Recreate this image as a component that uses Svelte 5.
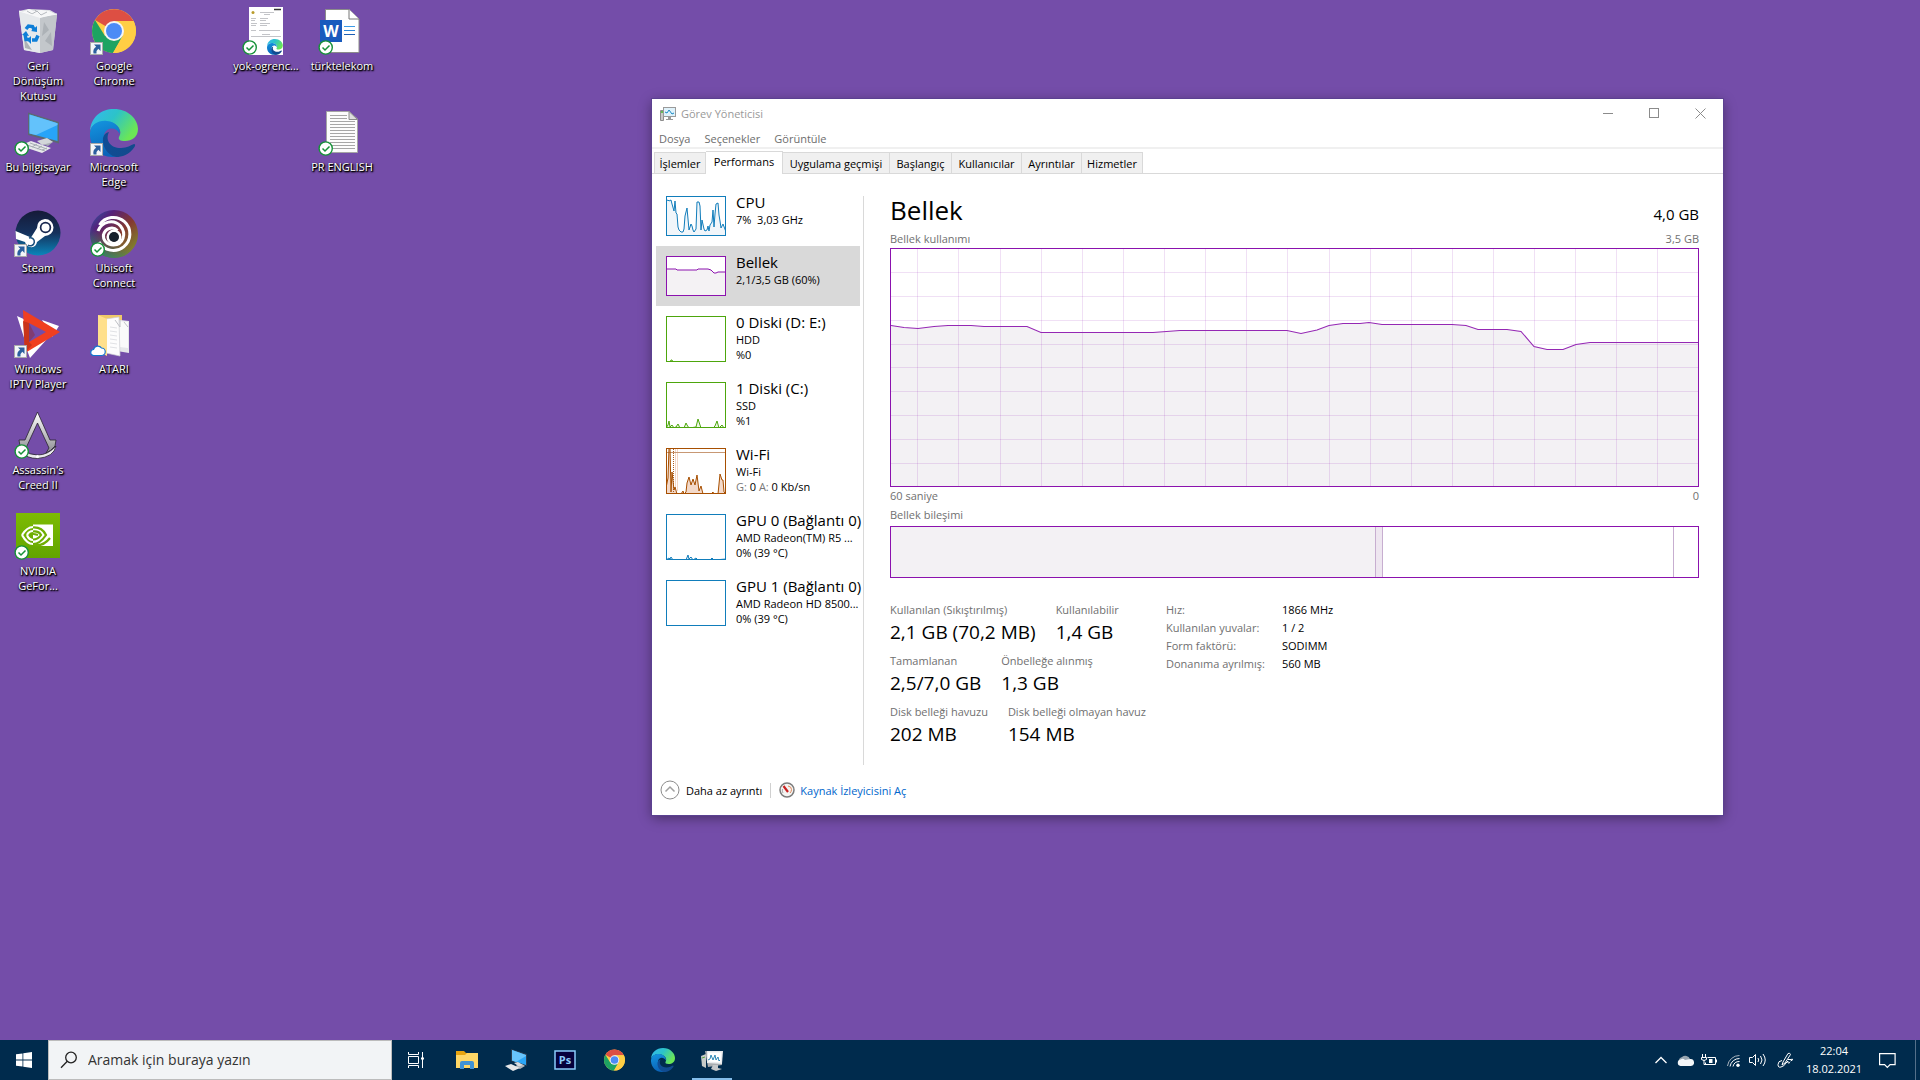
<script lang="ts">
  type Shortcut = { icon: string; lines: string[]; badge?: string };

  const columns: (Shortcut | null)[][] = [
    [
      { icon: 'bin', lines: ['Geri', 'Dönüşüm', 'Kutusu'] },
      { icon: 'pc', lines: ['Bu bilgisayar'], badge: 'check' },
      { icon: 'steam', lines: ['Steam'], badge: 'arrow' },
      { icon: 'iptv', lines: ['Windows', 'IPTV Player'], badge: 'arrow' },
      { icon: 'assassin', lines: ["Assassin's", 'Creed II'], badge: 'check' },
      { icon: 'nvidia', lines: ['NVIDIA', 'GeFor...'], badge: 'check' }
    ],
    [
      { icon: 'chrome', lines: ['Google', 'Chrome'], badge: 'arrow' },
      { icon: 'edge', lines: ['Microsoft', 'Edge'], badge: 'arrow' },
      { icon: 'ubisoft', lines: ['Ubisoft', 'Connect'], badge: 'check' },
      { icon: 'folder', lines: ['ATARI'], badge: 'cloud' }
    ],
    [],
    [{ icon: 'pdf', lines: ['yok-ogrenc...'], badge: 'check' }],
    [
      { icon: 'word', lines: ['türktelekom'], badge: 'check' },
      { icon: 'text', lines: ['PR ENGLISH'], badge: 'check' }
    ]
  ];

  const tabs = ['İşlemler', 'Performans', 'Uygulama geçmişi', 'Başlangıç', 'Kullanıcılar', 'Ayrıntılar', 'Hizmetler'];
  let activeTab = $state('Performans');

  const resources = [
    {
      name: 'CPU', lines: ['7%  3,03 GHz'], tone: 'blue', height: 40,
      points: '0,5 2,4 3,5 5,4 6,8 8,15 9,5 10,17 11,18 12,31 13,34 15,36 17,36 18,33 19,20 21,12 22,23 23,34 25,28 26,30 27,34 28,36 30,33 31,6 33,6 34,10 35,34 36,24 38,33 39,35 41,34 42,30 43,35 44,29 46,26 47,14 48,31 49,18 50,8 52,7 53,19 54,25 55,32 57,28 60,36'
    },
    {
      name: 'Bellek', lines: ['2,1/3,5 GB (60%)'], tone: 'purple', height: 40,
      points: '0,13 10,13 11,14 31,14 32,13 42,13 45,14 47,16 48,17 50,17 52,16 60,16'
    },
    { name: '0 Diski (D: E:)', lines: ['HDD', '%0'], tone: 'green', height: 46, points: '0,46 4,46 5,44 6,44 7,46 60,46' },
    {
      name: '1 Diski (C:)', lines: ['SSD', '%1'], tone: 'green', height: 46,
      points: '0,46 2,43 3,39 4,45 6,43 8,46 10,45 12,42 14,46 18,46 20,41 21,43 23,46 30,45 32,37 35,46 47,46 49,44 51,39 53,46 56,43 58,46 60,46'
    },
    {
      name: 'Wi-Fi', lines: ['Wi-Fi'], tone: 'orange', height: 46,
      points: '0,40 2,30 3,0 4,0 5,44 6,24 8,42 9,39 11,46 15,46 17,43 18,46 20,44 21,35 23,29 25,37 27,31 29,37 31,27 33,43 35,38 37,46 45,46 47,44 48,46 52,46 54,26 56,32 57,32 58,44 60,46'
    },
    {
      name: 'GPU 0 (Bağlantı 0)', lines: ['AMD Radeon(TM) R5 ...', '0% (39 °C)'], tone: 'blue', height: 46,
      points: '0,46 3,44 4,45 5,43 7,46 20,46 22,41 23,45 25,43 27,46 30,44 32,46 44,46 46,44 48,46 60,45'
    },
    { name: 'GPU 1 (Bağlantı 0)', lines: ['AMD Radeon HD 8500...', '0% (39 °C)'], tone: 'blue', height: 46, points: '' }
  ];
  let selected = $state('Bellek');

  const usage =
    '0,76.5 13,78.5 27,79.5 43,77.5 57,76.5 80,76.5 93,77.5 136,77.5 150,83.5 262,83.5 289,81.5 396,81.5 410,84.5 426,81 438,76.5 452,74.5 469,74.5 478,73.5 491,75.5 561,75.5 575,76.5 587,80.5 616,80.5 630,82.5 643,97.5 656,100.5 672,100.5 685,95.5 699,93.5 807,93.5';
  const gridX = Array.from({ length: 19 }, (_, i) => Math.round(26.3 + i * 41.12) + 0.5);
  const gridY = Array.from({ length: 9 }, (_, i) => Math.floor((i + 1) * 23.85 + 0.65) - 0.5);

  const statRows = [
    [['Kullanılan (Sıkıştırılmış)', '2,1 GB (70,2 MB)'], ['Kullanılabilir', '1,4 GB']],
    [['Tamamlanan', '2,5/7,0 GB'], ['Önbelleğe alınmış', '1,3 GB']],
    [['Disk belleği havuzu', '202 MB'], ['Disk belleği olmayan havuz', '154 MB']]
  ];
  const hardware = [
    ['Hız:', '1866 MHz'],
    ['Kullanılan yuvalar:', '1 / 2'],
    ['Form faktörü:', 'SODIMM'],
    ['Donanıma ayrılmış:', '560 MB']
  ];
  const pinned = [
    ['explorer', 'Dosya Gezgini'],
    ['pc', 'Bu bilgisayar'],
    ['ps', 'Photoshop'],
    ['chrome', 'Google Chrome'],
    ['edge', 'Microsoft Edge'],
    ['taskmgr', 'Görev Yöneticisi']
  ];
</script>

{#snippet art(name: string)}
  {#if name === 'bin'}
    <path d="M5 3 L14 1 L36 2 L43 6 L39 42 L26 45 L10 42 Z" fill="#d9dce0" />
    <path d="M5 3 L26 9 L26 45 L10 42 Z" fill="#e6e9ec" />
    <path d="M26 9 L43 6 L39 42 L26 45 Z" fill="#c3c7cb" />
    <path d="M30 14l5 8-7 6zM37 24l-6 9 7 5zM10 30l8 12-7-2z" fill="#adb2b7" />
    <path d="M8 4 L15 1 L20 3 L27 2 L35 3 L41 6 L26 10 Z" fill="#f6f7f8" />
    <path d="M13 3l5 3 5-3 4 4 6-3M20 1l3 3" stroke="#b6babf" fill="none" />
    <path d="M5 3 L26 9 L43 6" stroke="#f8f9fa" fill="none" />
    <g fill="none" stroke="#0f7fd8" stroke-width="3.500">
      <path d="M12 21l2.500-3 4 .5 1.500 3" /><path d="M11 26l1 5.500h4" /><path d="M18 32h4l2-4.500" />
    </g>
    <path d="M17 23l6 1 0-6zM17 28v8l-4-4zM8 27l4-4 3 5z" fill="#0f7fd8" />
  {:else if name === 'pc'}
    <path d="M27 33l9-4 4 3-6 5-6-2z" fill="#a9afb5" />
    <path d="M14 3.500 L45 13 V34.500 L14 26 Z" fill="#5d6873" />
    <path d="M15.500 5.500 L43.500 14.300 V32 L15.500 24.500 Z" fill="#27a4f8" />
    <path d="M15.500 5.500 L43.500 14.300 V16 L22 26 L15.500 24.500 Z" fill="#63c2fb" />
    <path d="M23 32l10-3 6 4-11 3z" fill="#d3d6d9" />
    <path d="M12 34l5-2 20 7-9 5-18-6z" fill="#e7e9eb" />
    <path d="M13 36l18 6M16 34l17 6M18 38l5-3M23 40l5-3M28 41l5-2" stroke="#a7adb3" />
  {:else if name === 'steam'}
    <defs><linearGradient id="steam-fill" x2="0" y2="1"><stop stop-color="#151a38" /><stop offset=".5" stop-color="#15315c" /><stop offset="1" stop-color="#0a86bb" /></linearGradient></defs>
    <circle cx="24" cy="23" r="22.500" fill="url(#steam-fill)" />
    <path d="M1.500 21 L17 27.500 L23 18 Q23 10 31 9 A8.500 8.500 0 1 1 31 26 L23 32 Q22 38 16 37 Q12 36 11 32 L2 29 Z" fill="#fff" />
    <circle cx="31.500" cy="17.500" r="5.700" fill="#17264e" /><circle cx="31.500" cy="17.500" r="4" fill="#fff" />
    <path d="M15 28a4 4 0 1 1-1 7" fill="none" stroke="#174d7b" stroke-width="1.500" />
  {:else if name === 'iptv'}
    <path d="M3 5 L14 10 L13 36 Z M28 9 L45 15 L38 26 Z M11 34 L16 47 L34 27 Z" fill="#fff" />
    <path fill-rule="evenodd" d="M9 -1 L46 21 L11 42 Z M15 12 V31 L32 21 Z" fill="#f03f20" />
    <path d="M9 10 L15 12 V31 L18 34 L11 42 Z" fill="#c9341a" />
    <path d="M15 12 L21 24 L15 31 Z" fill="#8e2a3c" opacity=".5" />
  {:else if name === 'assassin'}
    <defs><linearGradient id="blade" x2="0" y2="1"><stop stop-color="#fff" /><stop offset="1" stop-color="#8e8e93" /></linearGradient></defs>
    <g stroke="#28242e" stroke-width=".8">
      <path d="M23.500 0 L36 28 L42 28 L41 34 Q37 39 32 41 L35 36 L23.500 11 L12 36 L15 41 Q9 38 6 34 L5 28 L11 28 Z" fill="url(#blade)" />
      <path d="M8 38 Q16 43 23.500 43 Q34 43 42 34 Q40 45 23.500 46.500 Q13 46.500 7 40 Z" fill="#e9e9ec" />
    </g>
    <circle cx="23.500" cy="44.500" r="1.500" fill="#fff" />
  {:else if name === 'nvidia'}
    <defs><linearGradient id="nv-fill" x2="0" y2="1"><stop stop-color="#7dbb03" /><stop offset="1" stop-color="#62a400" /></linearGradient></defs>
    <rect x="2" y="0" width="44" height="45" fill="url(#nv-fill)" />
    <rect x="19" y="11.500" width="20" height="21.500" fill="#fff" />
    <g fill="none" stroke-width="2.200">
      <path d="M8 22 Q13 14 19 14 M8 22 Q13 31 19 31 M13 22 Q15 18 19 18 M13 22 Q15 27 19 27" stroke="#fff" />
      <path d="M19 14.500 Q28 14 32 22 Q26 31 19 31 M19 18.500 Q25 18 27 22 Q24 26.500 19 26.500 M36 25 Q29 34 19 32" stroke="#6fae02" />
      <path d="M17 23 Q17 20 20 21 L24 22" stroke="#6fae02" />
    </g>
  {:else if name === 'chrome'}
    <circle cx="24" cy="23" r="22" fill="#ffce44" />
    <path d="M24 23 L5 12 A22 22 0 0 1 43.500 13 H24 Z" fill="#dd4f43" />
    <path d="M5 12 A22 22 0 0 0 23 45 L33 28 L24 23 L15 28 Z" fill="#1da362" />
    <path d="M24 13 H43.500 A22 22 0 0 1 23 45 L33 27 Z" fill="#ffce44" />
    <circle cx="24" cy="23" r="10" fill="#f4f4f4" /><circle cx="24" cy="23" r="8" fill="#4c8bf5" />
  {:else if name === 'edge'}
    <defs>
      <linearGradient id="edge-top" x2="1" y2=".5"><stop stop-color="#35b8f1" /><stop offset=".5" stop-color="#2cc3c9" /><stop offset="1" stop-color="#6be656" /></linearGradient>
      <linearGradient id="edge-mid" x2=".3" y2="1"><stop stop-color="#1496e0" /><stop offset="1" stop-color="#0a63b8" /></linearGradient>
      <linearGradient id="edge-low" x2="1"><stop stop-color="#0f4d95" /><stop offset="1" stop-color="#134a8c" /></linearGradient>
    </defs>
    <path d="M0 22 C1 8 11 0 24 0 C38 0 48 10 48 20 C48 28 42 32 35 32 C30 32 28 30.500 29 28 C33 22 28 15 20 13 C10 11 2 15 0 22 Z" fill="url(#edge-top)" />
    <path d="M0 24 C1 15 9 11 17 12 C26 13 31 19 29.500 25 C26 17 15 18 14 27 C13 38 22 45 32 46 C14 53 -1 40 0 24 Z" fill="url(#edge-mid)" />
    <path d="M19 23 C15 31 20 39 31 39 C37 39 41 36 44 35 Q46 35 44.500 38 C39 46 32 48 26 48 C17 46 12 37 13 29 Q14 24 19 23 Z" fill="url(#edge-low)" />
  {:else if name === 'ubisoft'}
    <defs>
      <linearGradient id="ubi-fill" x2="1" y2="1"><stop stop-color="#2463a8" /><stop offset=".25" stop-color="#55217b" /><stop offset=".55" stop-color="#84382f" /><stop offset="1" stop-color="#7da32c" /></linearGradient>
      <linearGradient id="ubi-low" x1=".3" y1=".5" x2="0" y2="1"><stop stop-color="#168a80" stop-opacity="0" /><stop offset="1" stop-color="#17a37c" /></linearGradient>
    </defs>
    <circle cx="24" cy="24" r="24" fill="url(#ubi-fill)" /><circle cx="24" cy="24" r="24" fill="url(#ubi-low)" />
    <g fill="none" stroke="#fff" stroke-width="3">
      <path d="M9.500 15 A16.500 16.500 0 1 1 9 32" />
      <path d="M8 21 C12 11 24 9 30.500 16 C37 24 33 35 23.500 35 C17 35 12.500 30 13.500 24" />
      <path d="M13.500 25 C15 18 23 16 27.500 20.500" />
      <circle cx="24" cy="27" r="6" />
    </g>
    <circle cx="24" cy="27" r="5" fill="#17212c" />
  {:else if name === 'folder'}
    <path d="M8 4 H32 V40 H10 Z" fill="#efc969" />
    <path d="M22 8 L39 10 V42 L27 40 Z" fill="#e6e7ea" /><path d="M28 10 L38 11 V37 L30 36" fill="#fafafa" />
    <path d="M16 8 L29 6 V9 L30 45 L16 42 Z" fill="#fdfdfd" stroke="#cfd0d4" stroke-width=".7" />
    <path d="M25 9l5 7v-7M34 11l4 5" stroke="#bfc1c6" fill="none" />
    <path d="M20 16l7 1M20 20l7 1M20 24l7 1M20 28l7 1M20 32l7 1M20 36l7 1" stroke="#e1e2e5" />
    <path d="M8 4 L17 8 V45 L8 40 Z" fill="#ffe08c" />
  {:else if name === 'pdf'}
    <rect x="7" y="-1" width="34" height="48" fill="#fff" />
    <path d="M32 1.500h7" stroke="#333" stroke-width="1.500" />
    <circle cx="11" cy="4.500" r="1.500" fill="#b99c2a" />
    <path d="M18 4.500h14M22 6.500h6M9 10.500h5M18 10.500h8M9 12.500h4M18 12.500h6M9 15.500h6M18 15.500h10M9 17.500h5M18 17.500h7M9 22.500h5M17 22.500h21M9 28.500h30M20 26.500h8" stroke="#c3c4c8" />
    <g transform="translate(25 31) scale(.33)">{@render art('edge')}</g>
  {:else if name === 'word'}
    <path d="M7.500 1.500 H31 L41 11 V44.500 H7.500 Z" fill="#fff" stroke="#8b8b8b" />
    <path d="M31 1.500 V11 H41" fill="#fff" stroke="#777" />
    <path d="M26 18.500h11" stroke="#3c9ae6" /><path d="M26 22.500h11" stroke="#2d87da" /><path d="M26 26.500h11" stroke="#1d5fb5" />
    <rect x="2" y="12" width="22" height="22" fill="#185abd" />
    <text x="13" y="28.500" text-anchor="middle" class="logo-text" font-size="16" fill="#fff">W</text>
  {:else if name === 'text'}
    <path d="M8.500 2.500 H31 L39.500 10 V43.500 H8.500 Z" fill="#fcfcfc" stroke="#a5a5a5" />
    <path d="M31 2.500 V10.500 H39.500 Z" fill="#dedede" stroke="#8c8c8c" />
    <path d="M12 6.500h17M12 9.500h17M12 12.500h25M12 15.500h25M12 18.500h25M12 21.500h25M12 24.500h25M12 27.500h25M12 30.500h25M12 33.500h25M12 36.500h25M12 39.500h25" stroke="#a6a6a6" />
  {/if}
{/snippet}

{#snippet overlay(kind: string)}
  {#if kind === 'check'}
    <circle cx="7.700" cy="39.500" r="6.600" fill="#fff" stroke="#159138" stroke-width="1.400" />
    <path d="M4.500 39.500l2.500 2.500 4.500-4.500" fill="none" stroke="#159138" stroke-width="1.500" />
  {:else if kind === 'arrow'}
    <rect x=".5" y="34.500" width="12" height="12" fill="#f4f6f8" stroke="#a9a9a9" />
    <path d="M4 36.500h6.500V43l-2.200-2.200Q6 42.500 6.500 45.500H3.500Q2.500 41 6.200 38.700Z" fill="#2b5f9e" />
  {:else if kind === 'cloud'}
    <path d="M4 44.500a3 3 0 0 1-.5-6 4.500 4.500 0 0 1 8-1.500 3.700 3.700 0 0 1 0 7.500z" fill="#fff" stroke="#1175cf" stroke-width="1.200" />
  {/if}
{/snippet}

<div class="screen">
  <main class="desktop">
    <div class="shortcuts">
      {#each columns as column}
        <div class="shortcut-column">
          {#each column as item}
            {#if item}
              <button class="shortcut">
                <svg width="48" height="48" viewBox="0 0 48 48" aria-hidden="true">
                  {@render art(item.icon)}
                  {#if item.badge}{@render overlay(item.badge)}{/if}
                </svg>
                <span class="caption">
                  {#each item.lines as line}<span>{line}</span>{/each}
                </span>
              </button>
            {/if}
          {/each}
        </div>
      {/each}
    </div>

    <section class="window" aria-label="Görev Yöneticisi">
      <header class="titlebar">
        <svg width="16" height="16" viewBox="0 0 16 16" aria-hidden="true">
          <path d="M.5 4.500h3v10h-3z" fill="#c9c9c9" stroke="#8d8d8d" /><path d="M1 6h2" stroke="#45b52e" stroke-width="1.500" />
          <rect x="3.500" y="1.500" width="12" height="9" fill="#dff2fb" stroke="#9a9a9a" />
          <path d="M5 6l2 1 2-3 3 4 2-1" fill="none" stroke="#1989c4" /><path d="M8 11h3v2h2v1H6v-1h2z" fill="#999" />
        </svg>
        <h1>Görev Yöneticisi</h1>
        <div class="window-controls">
          <button aria-label="Simge durumuna küçült"><svg width="11" height="11"><path d="M0 5.500h10" stroke="#8b8b8b" /></svg></button>
          <button aria-label="Ekranı kapla"><svg width="11" height="11"><rect x=".5" y=".5" width="9" height="9" fill="none" stroke="#8b8b8b" /></svg></button>
          <button aria-label="Kapat"><svg width="11" height="11"><path d="M.5.5l10 10M10.500.5l-10 10" stroke="#8b8b8b" /></svg></button>
        </div>
      </header>
      <nav class="menubar" aria-label="Menü">
        <button>Dosya</button><button>Seçenekler</button><button>Görüntüle</button>
      </nav>
      <div class="tabs" role="tablist">
        {#each tabs as tab}
          <button role="tab" aria-selected={activeTab === tab} class:active={activeTab === tab} onclick={() => (activeTab = tab)}>{tab}</button>
        {/each}
      </div>

      <div class="content">
        <aside class="resources">
          {#each resources as item}
            <button class="resource {item.tone}" class:selected={selected === item.name} onclick={() => (selected = item.name)}>
              <svg class="spark" width="60" height={item.height} viewBox="0 0 60 {item.height}" aria-hidden="true">
                <rect width="60" height={item.height} fill="#fff" />
                {#if item.points}
                  <polygon points="0,{item.height} {item.points} 60,{item.height}" class="area" />
                  {#if item.name === 'Wi-Fi'}
                    <path d="M9.500 1v40M11.500 1v42" stroke="#f4d6c6" /><path d="M7.500 1v45" stroke="#ad5a1c" stroke-dasharray="1 1" />
                    <path d="M0 4.500h60" stroke="#c89874" />
                  {/if}
                  <polyline points={item.points} class="trace" />
                {/if}
                <rect x=".5" y=".5" width="59" height={item.height - 1} class="frame" />
              </svg>
              <span class="resource-text">
                <span class="resource-name">{item.name}</span>
                {#each item.lines as line}<span class="resource-line">{line}</span>{/each}
                {#if item.name === 'Wi-Fi'}
                  <span class="resource-line"><span class="muted">G:</span> 0 <span class="muted">A:</span> 0 Kb/sn</span>
                {/if}
              </span>
            </button>
          {/each}
        </aside>

        <section class="details">
          <div class="heading"><h2>Bellek</h2><span class="total">4,0 GB</span></div>
          <div class="legend"><span>Bellek kullanımı</span><span>3,5 GB</span></div>
          <div class="chart">
            <svg viewBox="0 0 807 237" preserveAspectRatio="none" aria-hidden="true">
              <polygon points="0,237 {usage} 807,237" fill="#f3f1f4" />
              <g stroke="#8b12ae" stroke-opacity=".13" shape-rendering="crispEdges">
                {#each gridX as x}<path d="M{x} 0V237" />{/each}
                {#each gridY as y}<path d="M0 {y}H807" />{/each}
              </g>
              <polyline points={usage} fill="none" stroke="#9528b4" stroke-width="1.100" />
            </svg>
          </div>
          <div class="legend axis"><span>60 saniye</span><span>0</span></div>
          <div class="legend"><span>Bellek bileşimi</span></div>
          <div class="composition"><i class="used"></i><i class="modified"></i><i class="standby"></i><i class="free"></i></div>

          <div class="figures">
            <div class="stats">
              {#each statRows as row}
                <dl class="stat-row">
                  {#each row as [label, value]}
                    <div><dt>{label}</dt><dd>{value}</dd></div>
                  {/each}
                </dl>
              {/each}
            </div>
            <table class="hardware">
              <tbody>
                {#each hardware as [label, value]}
                  <tr><th scope="row">{label}</th><td>{value}</td></tr>
                {/each}
              </tbody>
            </table>
          </div>
        </section>
      </div>

      <footer class="footer">
        <button class="less">
          <svg width="20" height="20" viewBox="0 0 20 20" fill="none" aria-hidden="true"><circle cx="10" cy="10" r="9" stroke="#8c8c8c" /><path d="M5.500 11.500l4.500-4.500 4.500 4.500" stroke="#a0a0a0" stroke-width="1.500" /></svg>
          Daha az ayrıntı
        </button>
        <a href="#kaynak-izleyicisi">
          <svg width="16" height="16" viewBox="0 0 16 16" fill="none" aria-hidden="true">
            <circle cx="8" cy="8" r="7" fill="#f4f4f2" stroke="#7b7b7b" stroke-width="1.500" />
            <path d="M4 11a4.500 4.500 0 0 1-.5-4" stroke="#aaa" /><path d="M9 4q3.500.5 3.500 3.500 0 2-1.500 3.500" stroke="#df8658" />
            <path d="M4.500 4l4.500 6" stroke="#c92020" stroke-width="2.200" />
          </svg>
          Kaynak İzleyicisini Aç
        </a>
      </footer>
    </section>
  </main>

  <footer class="taskbar">
    <button class="start" aria-label="Başlat">
      <svg width="16" height="16" viewBox="0 0 16 16" fill="#fff"><path d="M0 2.300l6.500-.9v6.100H0zM7.300 1.300L16 0v7.500H7.300zM0 8.400h6.500v6.200L0 13.700zM7.300 8.400H16V16l-8.700-1.200z" /></svg>
    </button>
    <label class="search">
      <svg width="18" height="18" viewBox="0 0 18 18" fill="none" stroke="#222" stroke-width="1.300" aria-hidden="true"><circle cx="11" cy="6.500" r="5.300" /><path d="M7.300 10.300L1 16.700" /></svg>
      <input type="text" placeholder="Aramak için buraya yazın" aria-label="Aramak için buraya yazın" />
    </label>
    <button class="task-view" aria-label="Görev Görünümü">
      <svg width="17" height="16" viewBox="0 0 17 16" fill="none" stroke="#fff"><path d="M.5 0v2.500h10V0M.5 16v-2.500h10V16M.5 4.500h10v7H.5zM14.500 0v16" /><path d="M13 5.500h3v2h-3z" fill="#fff" stroke="none" /></svg>
    </button>
    <div class="pinned">
      {#each pinned as [icon, label]}
        <button aria-label={label} class:running={icon === 'taskmgr'}>
          {#if icon === 'explorer'}
            <svg width="22" height="18" viewBox="0 0 22 18"><path d="M0 0h8l2 2h12v4H0z" fill="#e8a40f" /><path d="M1 4h8l2-2h11v15H0V4z" fill="#ffd766" /><path d="M4 18v-6q0-2 2-2h10q2 0 2 2v6h-4v-4H8v4z" fill="#3f92d4" /></svg>
          {:else if icon === 'pc'}
            <svg width="24" height="24" viewBox="0 0 24 24"><path d="M13 16l5-1 3 3-5 3-4-2z" fill="#aeb4b9" /><path d="M7 1l16 5v12L7 13z" fill="#2a3d50" /><path d="M8 2l14 5v10L8 12.500z" fill="#2ba6f7" /><path d="M8 2l14 5v1L12 14l-4-1.500z" fill="#68c4fb" /><path d="M10 15l4-1 5 3-4 1.500z" fill="#d8dbde" /><path d="M1 18l6-2 9 4-7 3z" fill="#e5e7e9" /></svg>
          {:else if icon === 'ps'}
            <svg width="22" height="20" viewBox="0 0 22 20"><rect x="1" y="1" width="20" height="18" fill="#06003c" stroke="#8ccbfb" stroke-width="1.500" /><text x="11" y="14" text-anchor="middle" class="logo-text" font-size="11" fill="#8ccbfb">Ps</text></svg>
          {:else if icon === 'taskmgr'}
            <svg width="24" height="24" viewBox="0 0 24 24"><path d="M1 8l5-2v14l-4-2z" fill="#c7cbc9" /><path d="M2 10l3-1" stroke="#5aa53c" /><path d="M5 3l15 1 2 13-14 2z" fill="#a9adb0" /><path d="M7 3h16l-1 13-15-1z" fill="#e8eaec" /><path d="M8 4.500h13.500l-.8 10L8 13.500z" fill="#fff" /><path d="M8 12l2-1 1-4 2 5 2-5 1 5 2-3 1 4 1-1" fill="none" stroke="#2b87b5" /><path d="M13 17h5v3l4 1-6 2-5-2z" fill="#c4c7c9" /></svg>
          {:else}
            <svg width={icon === 'edge' ? 24 : 23} height={icon === 'edge' ? 24 : 23} viewBox="0 0 48 48">{@render art(icon)}</svg>
          {/if}
        </button>
      {/each}
    </div>
    <div class="tray">
      <button aria-label="Gizli simgeler"><svg width="12" height="8" viewBox="0 0 12 8" fill="none" stroke="#fff" stroke-width="1.300"><path d="M.5 7L6 1.500 11.500 7" /></svg></button>
      <button aria-label="OneDrive"><svg width="17" height="11" viewBox="0 0 17 11"><path d="M2 7a4 4 0 0 1 3-5 5 5 0 0 1 8 2l-8 6z" fill="#99a6b1" /><path d="M3.500 11a3.300 3.300 0 0 1 0-6.500Q6 3 8 5l5-1a3.400 3.400 0 0 1 1 7z" fill="#f4f7f9" /></svg></button>
      <button aria-label="Pil"><svg width="17" height="13" viewBox="0 0 17 13" fill="none" stroke="#fff"><path d="M6.500 3.500h8v7h-10v-2M15.500 5.500v3M1.500 0v3M4.500 0v3M.5 3.500h5v2q-2.500 2-5 0zM3 6v4.500h2" /><path d="M8 5h3.500v4H8z" fill="#fff" stroke="none" /></svg></button>
      <button aria-label="Wi-Fi"><svg width="13" height="13" viewBox="0 0 13 13" fill="none"><g stroke="#aab5bf"><path d="M.5 12A12 12 0 0 1 12.500 1.500" /></g><path d="M3 12.500A9.500 9.500 0 0 1 12.500 4.500M6 12.500a6.500 6.500 0 0 1 6.500-5" stroke="#fff" /><circle cx="11" cy="11.300" r="1.700" fill="#fff" /></svg></button>
      <button aria-label="Ses"><svg width="17" height="14" viewBox="0 0 17 14" fill="none" stroke="#fff"><path d="M.5 4.500h3L6.500 1.500v11l-3-3h-3zM9 5q1.500 2 0 4M11.500 3q3 4 0 8M14 1q4.500 6 0 12" /></svg></button>
      <button class="pen" aria-label="Kalem"><svg width="17" height="16" viewBox="0 0 17 16" fill="none" stroke="#fff"><path d="M6 10L11 1.500q2-1 2.500 1L8 11l-3 2zM5 8.500Q1 9 1 12.500t3 2.500q3-.5 5-4l2-2q-1 3 2 1.500M11 7.500h3q2-1 1.500.5l-2 1" /></svg></button>
      <time datetime="2021-02-18T22:04"><span>22:04</span><span>18.02.2021</span></time>
      <button class="notifications" aria-label="Bildirimler"><svg width="17" height="17" viewBox="0 0 17 17" fill="none" stroke="#fff" stroke-width="1.200"><path d="M.6 1.600h15.500v11h-5L8.300 15.500 5.600 12.600h-5z" /></svg></button>
      <button class="show-desktop" aria-label="Masaüstünü göster"></button>
    </div>
  </footer>
</div>

<style>
  :global(body) { margin: 0; }
  .screen {
    display: flex;
    flex-direction: column;
    min-height: 100vh;
    background: #744da9;
    color: #000;
    font-family: 'Open Sans', 'Noto Sans', sans-serif;
    font-size: 11px;
    line-height: 15px;
  }
  button, input { font: inherit; color: inherit; border: 0; padding: 0; background: none; }
  h1, h2, dl, dd { margin: 0; font-weight: 400; }
  svg { display: block; flex: none; }
  .logo-text { font-family: 'Open Sans', sans-serif; font-weight: 700; }

  .desktop { position: relative; flex: 1; min-height: 860px; }
  .shortcuts { display: flex; padding-top: 8px; }
  .shortcut-column { width: 76px; }
  .shortcut { display: flex; flex-direction: column; align-items: center; gap: 2px; width: 100%; height: 101px; }
  .shortcut svg { overflow: visible; }
  .caption { display: flex; flex-direction: column; align-items: center; color: #fff; white-space: nowrap; text-shadow: 1px 1px 2px #000, 0 1px 2px #000, 1px 1px 1px #000; }

  .window {
    position: absolute;
    top: 99px;
    left: 652px;
    right: 197px;
    bottom: 225px;
    display: flex;
    flex-direction: column;
    background: #fff;
    box-shadow: 0 0 0 1px #5b4191, 0 3px 12px #0006;
  }
  .titlebar { display: flex; align-items: center; gap: 5px; height: 29px; padding-left: 8px; color: #999; }
  h1 { flex: 1; font-size: 11px; }
  .window-controls { display: flex; }
  .window-controls button { display: grid; place-items: center; width: 46px; height: 29px; }
  .menubar { display: flex; align-items: flex-start; gap: 14px; padding: 3px 7px 0; height: 16px; border-bottom: 2px solid #f0f0f0; color: #6d6d6d; }
  .tabs {
    display: grid;
    grid-template-columns: 52px 77px 107px 62px 70px 60px 61px;
    align-items: end;
    height: 24px;
    padding-left: 2px;
    border-bottom: 1px solid #d9d9d9;
  }
  .tabs button { height: 21px; background: #f0f0f0; border: solid #d9d9d9; border-width: 1px 1px 0 0; white-space: nowrap; }
  .tabs button:first-child { border-left-width: 1px; }
  .tabs .active { height: 23px; padding-bottom: 3px; margin-bottom: -1px; background: #fff; }

  .content { flex: 1; display: flex; padding-top: 12px; min-height: 0; }
  .resources { width: 204px; margin-left: 4px; flex: none; }
  .resource { display: flex; gap: 10px; width: 204px; padding: 7px 0 10px 10px; text-align: left; white-space: nowrap; }
  .resource.selected { background: #d9d9d9; }
  .spark { margin-top: 3px; }
  .resource-text { display: flex; flex-direction: column; }
  .resource-name { font-size: 15px; line-height: 19px; }
  .resource-line { white-space: pre; }
  .muted { color: #777; }
  .frame, .trace { fill: none; stroke: var(--tone); stroke-width: 1px; }
  .area { fill: var(--tint); }
  .blue { --tone: #117dbb; --tint: #f1f6fa; }
  .purple { --tone: #8b12ae; --tint: #f4f2f4; }
  .green { --tone: #4da60c; --tint: #eff7e9; }
  .orange { --tone: #a74f01; --tint: #f3d9c9; }

  .details { flex: 1; min-width: 0; margin: 10px 0 0 3px; padding: 0 24px 0 26px; border-left: 1px solid #d9d9d9; }
  .heading { display: flex; justify-content: space-between; align-items: baseline; height: 35px; }
  h2 { font-size: 26px; line-height: 28px; }
  .total { font-size: 15px; }
  .legend { display: flex; justify-content: space-between; height: 17px; color: #707070; }
  .chart { border: 1px solid #8b12ae; }
  .chart svg { width: 100%; height: 237px; }
  .legend.axis { padding-top: 1px; height: 19px; }
  .legend + .legend { height: 19px; }
  .composition { display: flex; height: 50px; border: 1px solid #8b12ae; }
  .composition i { border-right: 1px solid #c7aed0; }
  .used { flex: 486; background: #f3f1f4; }
  .modified { flex: 6; background: #eee6f0; }
  .standby { flex: 291; }
  .composition .free { flex: 24; border-right: 0; }
  .figures { display: flex; gap: 12px; padding-top: 24px; }
  .stats { flex: none; width: 264px; display: flex; flex-direction: column; gap: 5px; }
  .stat-row { display: flex; gap: 20px; white-space: nowrap; }
  dt, th { color: #707070; font-weight: 400; }
  dd { font-size: 19px; line-height: 31px; }
  .hardware { border-collapse: collapse; align-self: flex-start; text-align: left; }
  .hardware th, .hardware td { padding: 0 0 3px; }
  .hardware th { width: 116px; }

  .footer { display: flex; align-items: center; gap: 8px; height: 50px; padding: 0 7px 0 8px; }
  .less { display: flex; align-items: center; gap: 6px; }
  .footer a { display: flex; align-items: center; gap: 5px; padding-left: 8px; color: #0066cc; text-decoration: none; border-left: 1px solid #d0d0d0; height: 15px; }

  .taskbar { display: flex; height: 40px; background: #002b4d; color: #fff; }
  .start, .task-view { display: grid; place-items: center; width: 48px; }
  .search { display: flex; align-items: center; gap: 10px; width: 344px; box-sizing: border-box; padding-left: 11px; background: #f2f4f6; border: 1px solid #bcbcbc; color: #333; }
  .search input { flex: 1; min-width: 0; font-size: 14px; line-height: 20px; outline: 0; }
  .search input::placeholder { color: #333; opacity: 1; }
  .pinned { display: flex; gap: 1px; margin-left: 3px; }
  .pinned button { display: grid; place-items: center; width: 48px; }
  .pinned .running { border: solid transparent; border-width: 0 4px; background: linear-gradient(#84bdea, #84bdea) bottom / 100% 2px no-repeat; }
  .tray { display: flex; margin-left: auto; }
  .tray button { display: grid; place-items: center; width: 24px; }
  .tray .pen { margin: 0 8px 0 4px; }
  time { display: flex; flex-direction: column; justify-content: center; width: 58px; text-align: center; line-height: 18px; }
  .tray .notifications { width: 48px; margin-right: 4px; }
  .tray .show-desktop { width: 5px; border-left: 1px solid #54708a; }
</style>
